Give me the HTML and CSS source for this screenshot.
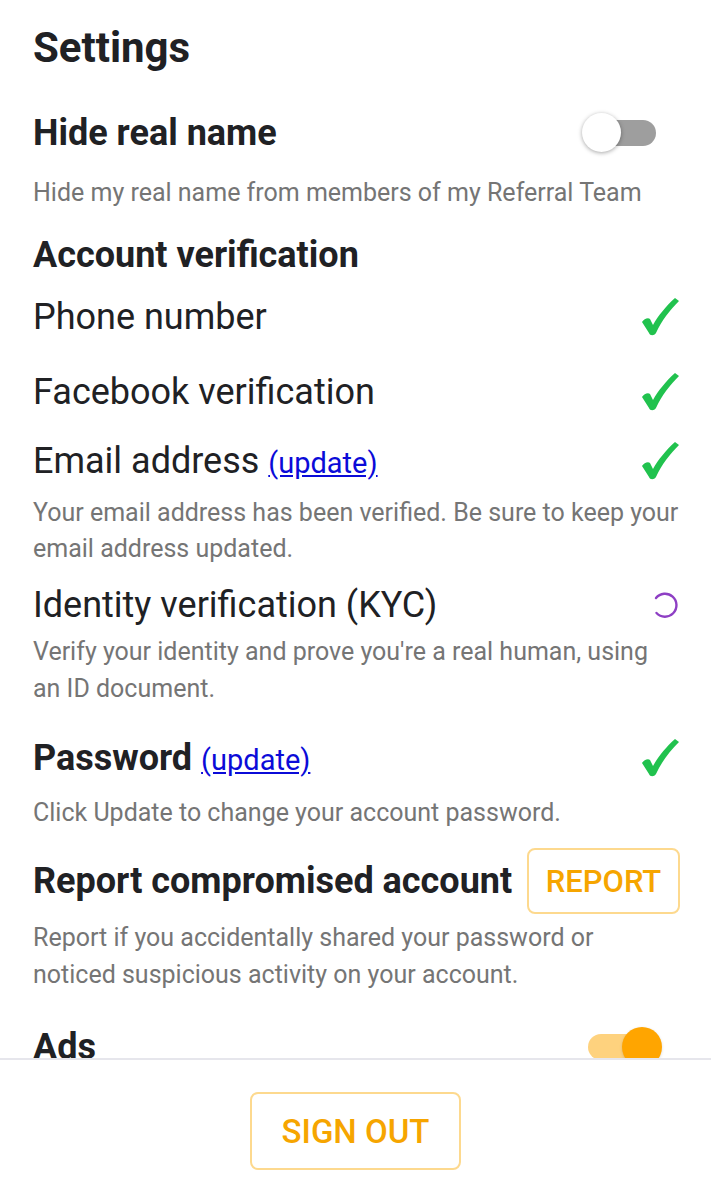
FILE: index.html
```html
<!DOCTYPE html>
<html>
<head>
<meta charset="utf-8">
<link rel="stylesheet" href="styles.css">
</head>
<body>
<div class="screen">
  <main class="content">
    <h1 class="title">Settings</h1>

    <div class="row row-hide">
      <span class="heading">Hide real name</span>
      <span class="toggle off"><span class="track"></span><span class="thumb"></span></span>
    </div>
    <p class="desc d-hide">Hide my real name from members of my Referral Team</p>

    <h2 class="heading h-account">Account verification</h2>

    <div class="row row-item r-phone">
      <span class="item">Phone number</span>
      <svg class="check" viewBox="0 0 40 40"><path d="M2 25 C4 22 8 20 10 22 L13 28 C18 19 26 9 35 1 L39 4 C30 13 22 23 16 36 C14 39 10 39 9 36 Z" fill="#21c24e"/></svg>
    </div>
    <div class="row row-item r-fb">
      <span class="item">Facebook verification</span>
      <svg class="check" viewBox="0 0 40 40"><path d="M2 25 C4 22 8 20 10 22 L13 28 C18 19 26 9 35 1 L39 4 C30 13 22 23 16 36 C14 39 10 39 9 36 Z" fill="#21c24e"/></svg>
    </div>
    <div class="row row-item r-email">
      <span class="item">Email address <a class="link" href="#">(update)</a></span>
      <svg class="check" viewBox="0 0 40 40"><path d="M2 25 C4 22 8 20 10 22 L13 28 C18 19 26 9 35 1 L39 4 C30 13 22 23 16 36 C14 39 10 39 9 36 Z" fill="#21c24e"/></svg>
    </div>
    <p class="desc d-email">Your email address has been verified. Be sure to keep your email address updated.</p>

    <div class="row row-item r-kyc">
      <span class="item">Identity verification (KYC)</span>
      <svg class="spinner" viewBox="0 0 30 30"><path d="M7 8 A 11.5 11.5 0 1 1 7.5 23" fill="none" stroke="#8e3fc4" stroke-width="2.4" stroke-linecap="round"/></svg>
    </div>
    <p class="desc d-kyc">Verify your identity and prove you're a real human, using an ID document.</p>

    <div class="row r-pass">
      <span class="heading">Password <a class="link" href="#">(update)</a></span>
      <svg class="check" viewBox="0 0 40 40"><path d="M2 25 C4 22 8 20 10 22 L13 28 C18 19 26 9 35 1 L39 4 C30 13 22 23 16 36 C14 39 10 39 9 36 Z" fill="#21c24e"/></svg>
    </div>
    <p class="desc d-pass">Click Update to change your account password.</p>

    <div class="row r-report">
      <span class="heading">Report compromised account</span>
      <button class="btn btn-report">REPORT</button>
    </div>
    <p class="desc d-report">Report if you accidentally shared your password or noticed suspicious activity on your account.</p>

    <div class="row r-ads">
      <span class="heading">Ads</span>
      <span class="toggle on"><span class="track"></span><span class="thumb"></span></span>
    </div>
  </main>
  <footer class="footer">
    <button class="btn btn-signout">SIGN OUT</button>
  </footer>
</div>
</body>
</html>
```

FILE: styles.css
```css
* { box-sizing: border-box; }
html, body { margin: 0; padding: 0; background: #fff; }
body { font-family: Roboto, "Noto Sans", "Liberation Sans", sans-serif; color: #202124; }

.screen { width: 711px; height: 1200px; display: flex; flex-direction: column; }
.content { flex: 1; overflow: hidden; padding: 24px 31px 0 33px; }

.title { margin: 0; font-size: 42px; line-height: 48px; font-weight: 700; letter-spacing: 0; }

.heading { font-size: 36px; font-weight: 700; letter-spacing: 0; margin: 0; white-space: nowrap; }
.item { font-size: 36px; font-weight: 400; white-space: nowrap; }

.row { display: flex; align-items: center; justify-content: space-between; }

.row-hide { margin-top: 36px; height: 50px; }
.desc { margin: 0; font-size: 25px; line-height: 36px; color: #757575; }
.d-hide { margin-top: 17px; }
.h-account { margin-top: 22px; line-height: 44px; }

.row-item { height: 60px; }
.r-phone { margin-top: 10px; }
.r-fb { margin-top: 15px; }
.r-email { margin-top: 9px; }
.d-email { margin-top: 4px; }
.r-kyc { margin-top: 13px; height: 50px; }
.d-kyc { margin-top: 3px; line-height: 37px; }
.r-pass { margin-top: 26px; height: 50px; }
.d-pass { margin-top: 12px; }
.r-report { margin-top: 17px; height: 66px; }
.d-report { margin-top: 5px; line-height: 37px; }
.r-ads { margin-top: 29px; height: 50px; }

.link { color: #0b0bd8; text-decoration: underline; font-size: 29px; font-weight: 400; letter-spacing: 0; }

.check { width: 40px; height: 40px; flex: none; }
.spinner { width: 30px; height: 30px; margin-right: 1px; flex: none; }

.toggle { position: relative; width: 76px; height: 44px; flex: none; }
.toggle .track { position: absolute; top: 9px; height: 26px; border-radius: 13px; }
.toggle .thumb { position: absolute; top: 2px; width: 40px; height: 40px; border-radius: 50%; }
.toggle.off { margin-right: 24px; }
.toggle.off .track { left: 20px; width: 56px; background: #9e9e9e; }
.toggle.off .thumb { left: 2px; width: 39px; height: 39px; background: #fff; box-shadow: 0 1px 4px rgba(0,0,0,0.35); }
.toggle.on { margin-right: 16px; }
.toggle.on .track { left: 0; width: 56px; background: #fed27e; }
.toggle.on .thumb { left: 34px; background: #ffa500; box-shadow: 0 1px 3px rgba(0,0,0,0.15); }

.btn { background: #fff; border: 2px solid #fdd98e; border-radius: 8px; color: #f6a500; font-family: Roboto, "Noto Sans", sans-serif; font-weight: 500; cursor: pointer; }
.btn-report { width: 153px; height: 66px; font-size: 31px; padding: 0; flex: none; }

.footer { height: 142px; border-top: 2px solid #e6e6ec; display: flex; justify-content: center; padding-top: 32px; }
.btn-signout { width: 211px; height: 78px; font-size: 33px; padding: 0; }
```
